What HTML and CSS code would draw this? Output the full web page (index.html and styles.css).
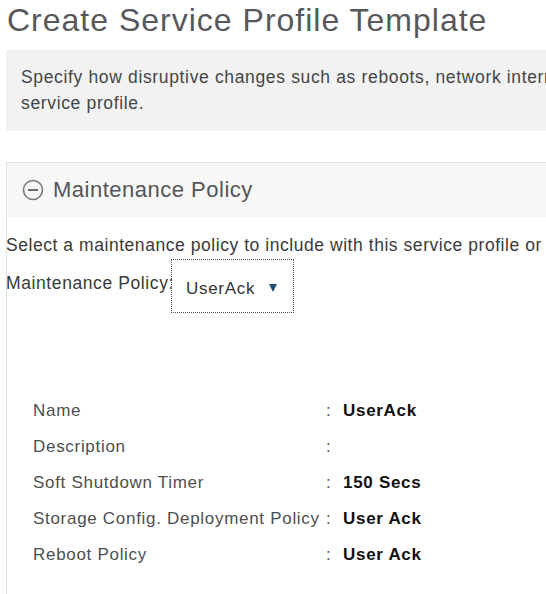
FILE: index.html
```html
<!DOCTYPE html>
<html>
<head>
<meta charset="utf-8">
<link rel="stylesheet" href="styles.css">
</head>
<body>
<h1 class="title">Create Service Profile Template</h1>
<div class="intro">
  <div class="intro-line">Specify how disruptive changes such as reboots, network interruptions, and firmware upgrades should be applied to the server associated with this</div>
  <div class="intro-line">service profile.</div>
</div>
<div class="panel">
  <div class="panel-head">
    <svg class="toggle" width="22" height="22" viewBox="0 0 22 22">
      <circle cx="11" cy="11" r="9.5" fill="none" stroke="#7a7a7a" stroke-width="1.6"/>
      <line x1="6" y1="11" x2="16" y2="11" stroke="#6a6a6a" stroke-width="2"/>
    </svg>
    <span class="panel-title">Maintenance Policy</span>
  </div>
  <div class="panel-body">
    <div class="hint">Select a maintenance policy to include with this service profile or create a new maintenance policy that will be accessible to all service profiles.</div>
    <div class="field">
      <span class="field-label">Maintenance Policy:</span>
      <div class="select">
        <span class="select-value">UserAck</span>
        <span class="select-arrow"></span>
      </div>
    </div>
    <div class="details">
      <div class="d-label">Name</div><div class="d-colon">:</div><div class="d-value">UserAck</div>
      <div class="d-label">Description</div><div class="d-colon">:</div><div class="d-value"></div>
      <div class="d-label">Soft Shutdown Timer</div><div class="d-colon">:</div><div class="d-value">150 Secs</div>
      <div class="d-label">Storage Config. Deployment Policy</div><div class="d-colon">:</div><div class="d-value">User Ack</div>
      <div class="d-label">Reboot Policy</div><div class="d-colon">:</div><div class="d-value">User Ack</div>
    </div>
  </div>
</div>
</body>
</html>
```
FILE: styles.css
```css
html, body {
  margin: 0;
  padding: 0;
  background: #ffffff;
  overflow: hidden;
}
body {
  font-family: "Liberation Sans", Arial, sans-serif;
  width: 546px;
  height: 594px;
  overflow: hidden;
}
.title {
  margin: 0;
  padding-left: 7px;
  font-size: 32px;
  letter-spacing: 1px;
  font-weight: normal;
  line-height: 40px;
  height: 50px;
  color: #58585a;
  white-space: nowrap;
}
.intro {
  margin-left: 6px;
  background: #f2f2f2;
  padding: 14px 0 15px 15px;
  font-size: 17.5px;
  letter-spacing: 0.65px;
  line-height: 26px;
  color: #454545;
  white-space: nowrap;
  overflow: hidden;
}
.panel {
  margin-top: 31px;
  margin-left: 6px;
  border-top: 1px solid #e2e2e2;
  border-left: 1px solid #e2e2e2;
  height: 440px;
}
.panel-head {
  height: 54px;
  background: #f7f7f7;
  display: flex;
  align-items: center;
  padding-left: 15px;
  gap: 9px;
}
.panel-title {
  font-size: 22px;
  letter-spacing: 0.5px;
  color: #555557;
}
.panel-body {
  font-size: 17px;
  letter-spacing: 0.7px;
  color: #3a3a3a;
}
.hint {
  margin-left: -1px;
  padding-top: 17px;
  line-height: 22px;
  font-size: 17.5px;
  letter-spacing: 0.55px;
  white-space: nowrap;
  overflow: hidden;
}
.field {
  display: flex;
  align-items: flex-start;
  margin-left: -1px;
  margin-top: 3px;
}
.field-label {
  line-height: 22px;
  padding-top: 13px;
  font-size: 17.5px;
  letter-spacing: 0.6px;
}
.select {
  margin-left: -3px;
  border: 1px dotted #555;
  display: flex;
  align-items: center;
  padding-left: 14px;
  box-sizing: border-box;
  width: 123px;
  height: 54px;
  padding-top: 6px;
}
.select-value {
  font-size: 17px;
  color: #333;
}
.select-arrow {
  margin-left: 14px;
  margin-top: -3px;
  width: 0;
  height: 0;
  border-left: 4.5px solid transparent;
  border-right: 4.5px solid transparent;
  border-top: 8px solid #1f4f74;
}
.details {
  margin-top: 80px;
  padding-left: 26px;
  display: grid;
  grid-template-columns: 293px 17px auto;
  grid-auto-rows: 36px;
  align-items: center;
}
.d-label {
  color: #4e4e4e;
  white-space: nowrap;
}
.d-colon {
  color: #4e4e4e;
}
.d-value {
  font-weight: bold;
  color: #111;
}
```
